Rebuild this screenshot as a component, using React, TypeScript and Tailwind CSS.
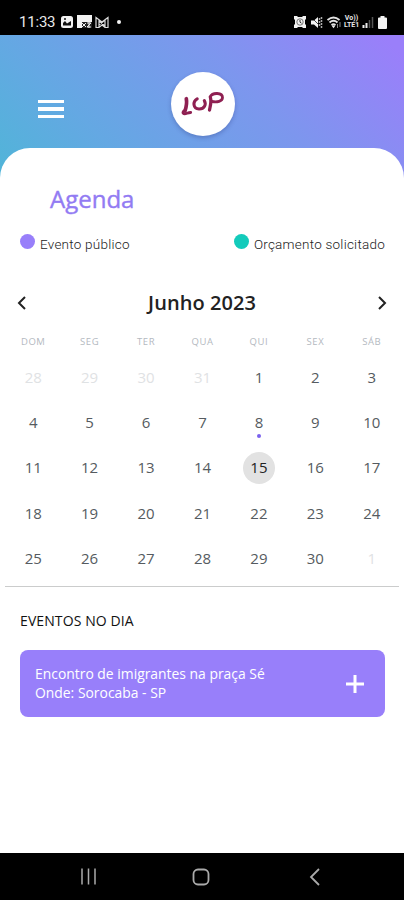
import React from "react";

const weekdays = ["DOM", "SEG", "TER", "QUA", "QUI", "SEX", "SÁB"];
const days = [28, 29, 30, 31, ...Array.from({ length: 30 }, (_, i) => i + 1), 1];

function StatusBar() {
  return (
    <div className="flex h-[35px] shrink-0 items-center bg-black pt-[9px] pl-[19px] pr-[17px] text-[#e8e8e8]">
      <span className="w-[37px] whitespace-nowrap font-[Roboto,sans-serif] text-[15px] leading-[18px] font-normal tracking-[-0.2px]">11:33</span>
      <svg className="ml-[4px]" width="14" height="14" viewBox="0 0 14 14">
        <rect x="1" y="1" width="12" height="12" rx="2.5" fill="#f2f2f2" />
        <path d="M3 10.5V8l2-2 2 2.5L11 6v4.5z" fill="#111" />
        <circle cx="5" cy="4" r="1" fill="#111" />
      </svg>
      <svg className="ml-[3px]" width="16" height="14" viewBox="0 0 16 14">
        <path d="M0 0h15v13H0z" fill="#f2f2f2" />
        <path d="M5 7h10v6H5z" fill="#222" />
        <path d="M5 8l4 4M9 8l-4 4M10 8h4l-4 4h4M12 7v6" stroke="#eee" strokeWidth="1" fill="none" />
      </svg>
      <svg className="ml-[2px]" width="15" height="13" viewBox="0 0 15 13">
        <path d="M1 1.500L7 6l6-4.500v10h-3L7 9l-3 2.500H1zM4 4v7M10 4v7M4 9l6-5M4 5l6 5" fill="none" stroke="#dcdcdc" strokeWidth="1.200" />
      </svg>
      <span className="ml-[7px] size-[4px] rounded-full bg-[#f2f2f2]" />
      <svg className="ml-auto" width="12" height="12" viewBox="0 0 12 12">
        <path d="M0 0h3l1 1h4l1-1h3v3l-1 1v4l1 1v3H9l-1-1H4l-1 1H0V9l1-1V4L0 3z" fill="#f2f2f2" />
        <circle cx="6" cy="6" r="3.200" fill="none" stroke="#777" />
        <path d="M6 4v2.200l1.500 1" fill="none" stroke="#333" />
      </svg>
      <svg className="ml-[4px]" width="13" height="13" viewBox="0 0 13 13">
        <path d="M1 4.500h3L8 1v11L4 8.500H1z" fill="#f2f2f2" />
        <path d="M1 1l11 11" stroke="#000" strokeWidth=".7" />
        <path d="M9.500 2v9M11.500 1v11" stroke="#aaa" strokeWidth="1.500" strokeDasharray="2 1" />
      </svg>
      <svg className="ml-[4px]" width="15" height="13" viewBox="0 0 15 13">
        <path d="M.5 4q6-5 12 0M2.500 6.500q4-3.500 8 0M4.500 9q2-1.500 4 0" fill="none" stroke="#e2e2e2" strokeWidth="1.900" />
        <path d="M4.500 9.500h4l-2 2.800z" fill="#eee" />
        <path d="M10.500 8v4M13 6v5" stroke="#888" />
      </svg>
      <span className="ml-[2px] w-[15px] text-center font-[Roboto,sans-serif] text-[7px] leading-[7px] font-bold">
        Vo)) LTE1
      </span>
      <svg className="ml-[3px]" width="12" height="12" viewBox="0 0 12 12">
        <path d="M1.500 9v3M4.500 7v5" stroke="#eee" strokeWidth="2" />
        <path d="M7.500 4v8M10.500 1v11" stroke="#555" strokeWidth="1.500" />
      </svg>
      <svg className="ml-[4px]" width="9" height="13" viewBox="0 0 9 13">
        <path d="M2.500 0h4v1.500H8q1 0 1 1V12q0 1-1 1H1q-1 0-1-1V2.500q0-1 1-1h1.500z" fill="#f4f4f4" />
      </svg>
    </div>
  );
}

function Logo() {
  return (
    <div className="flex size-16 items-center justify-center rounded-full bg-white shadow-[0_2px_4px_rgba(40,50,120,0.3)]">
      <svg width="48" height="34" viewBox="0 0 48 34" fill="none" stroke="#8f2052" strokeLinecap="round" strokeLinejoin="round">
        <path d="M7.300 11.700Q8.300 17 6 24" strokeWidth="3.700" />
        <path d="M6.500 23c-3 .8-3.500 3.800-.8 3.800 2 0 3-1.300 6-1.300" strokeWidth="2.800" />
        <path d="M18.200 11.800c-4.800 2.700-4.200 10 1.800 10.200 5.500.1 7.500-4.500 5.300-8.500" strokeWidth="3.100" />
        <path d="M31.500 11c1.200 4-.4 8.500-1 12" strokeWidth="3.300" />
        <path d="M31 10c2.500-5 12.500-4.500 12.500.5 0 4-5.500 4.800-10.500 4" strokeWidth="2.800" />
      </svg>
    </div>
  );
}

function Calendar() {
  return (
    <section className="mt-[34px]">
      <div className="flex h-8 items-center justify-between pr-4 pl-[16px] text-[#222]">
        <svg width="12" height="16" viewBox="0 0 12 16" fill="none" stroke="currentColor" strokeWidth="2">
          <path d="M9 2L3 8l6 6" />
        </svg>
        <h2 className="text-[20px] leading-6 font-semibold tracking-[0.05px]">Junho 2023</h2>
        <svg width="12" height="16" viewBox="0 0 12 16" fill="none" stroke="currentColor" strokeWidth="2">
          <path d="M3 2l6 6-6 6" />
        </svg>
      </div>
      <div className="mr-1 ml-[5px] grid grid-cols-7 pt-[15px] text-center text-[9.5px] leading-[16px] tracking-[0.6px] text-[#b4b9bf]">
        {weekdays.map((d) => <span key={d}>{d}</span>)}
      </div>
      <div className="mr-1 ml-[5px] grid auto-rows-[45.3px] grid-cols-7 pt-[5px] text-[15px]">
        {days.map((day, i) => {
          const outside = i < 4 || i === 34;
          const selected = i === 18;
          return (
            <div key={i} className="relative flex items-center justify-center">
              <span className={`flex size-8 items-center justify-center rounded-full ${selected ? "bg-[#e2e2e2] text-[#222]" : outside ? "text-[#dfe2e4]" : "text-[#555b60]"}`}>
                <span className="-mt-px">{day}</span>
              </span>
              {i === 11 && <span className="absolute top-[34px] size-1 rounded-full bg-[#7a61ee]" />}
            </div>
          );
        })}
      </div>
    </section>
  );
}

export default function App() {
  return (
    <div className="flex h-[900px] w-[404px] flex-col overflow-hidden bg-white font-['Open_Sans','Noto_Sans',sans-serif]">
      <StatusBar />
      <header className="flex h-[143px] shrink-0 items-start bg-[linear-gradient(45deg,#50b5d8_0%,#64a8e3_26%,#7d96ee_62%,#9a7ffa_96%)] pt-[37px] pl-[38px]">
        <div className="mt-[28px] flex w-[26px] flex-col gap-[4px]">
          <span className="h-[3px] bg-white" />
          <span className="h-[4px] bg-white" />
          <span className="h-[3px] bg-white" />
        </div>
        <div className="ml-[107px]"><Logo /></div>
      </header>
      <main className="-mt-[30px] flex min-h-0 flex-1 flex-col rounded-t-[30px] bg-white">
        <h1 className="mt-[35px] ml-[50px] text-[24px] leading-[32px] text-[#927bf3] [-webkit-text-stroke:0.4px_#927bf3]">Agenda</h1>
        <div className="mt-[18px] flex h-5 items-center justify-between pr-[19px] pl-5 font-[Roboto,sans-serif] text-[13.5px] font-light text-[#222]">
          <span className="flex items-center gap-[5px]">
            <span className="mb-[4px] size-[15px] rounded-full bg-[#987ffa]" />
            <span className="pt-[2px] tracking-[0.24px]">Evento público</span>
          </span>
          <span className="flex items-center gap-[5px]">
            <span className="mb-[4px] size-[15px] rounded-full bg-[#13cbbb]" />
            <span className="pt-[2px] tracking-[0.24px]">Orçamento solicitado</span>
          </span>
        </div>
        <Calendar />
        <div className="mt-[5px] mr-[5px] ml-[5px] h-px shrink-0 bg-[#cbcccc]" />
        <h3 className="mt-[24px] ml-5 text-[14px] leading-5 tracking-[0.1px] text-[#111]">EVENTOS NO DIA</h3>
        <article className="mt-[19px] mr-[19px] ml-5 flex h-[67px] items-center justify-between rounded-[8px] bg-[#987ffa] pr-[20px] pl-[15px] text-white">
          <p className="-mt-px text-[13.9px] leading-[19px]">Encontro de imigrantes na praça Sé<br />Onde: Sorocaba - SP</p>
          <svg width="20" height="20" viewBox="0 0 20 20" stroke="white" strokeWidth="3"><path d="M10 1v18M1 10h18" /></svg>
        </article>
      </main>
      <nav className="flex h-[47px] shrink-0 items-center bg-black pl-[80px] text-[#aaa]">
        <svg width="17" height="17" viewBox="0 0 17 17" stroke="currentColor" strokeWidth="1.500"><path d="M2 .5v16M8.500 .5v16M15 .5v16" /></svg>
        <svg className="ml-[95px]" width="18" height="18" viewBox="0 0 18 18" fill="none" stroke="currentColor" strokeWidth="1.800"><rect x="1.500" y="1.500" width="15" height="15" rx="4.500" /></svg>
        <svg className="ml-[98px]" width="12" height="18" viewBox="0 0 12 18" fill="none" stroke="currentColor" strokeWidth="1.800"><path d="M11 1L3 9l8 8" /></svg>
      </nav>
    </div>
  );
}
